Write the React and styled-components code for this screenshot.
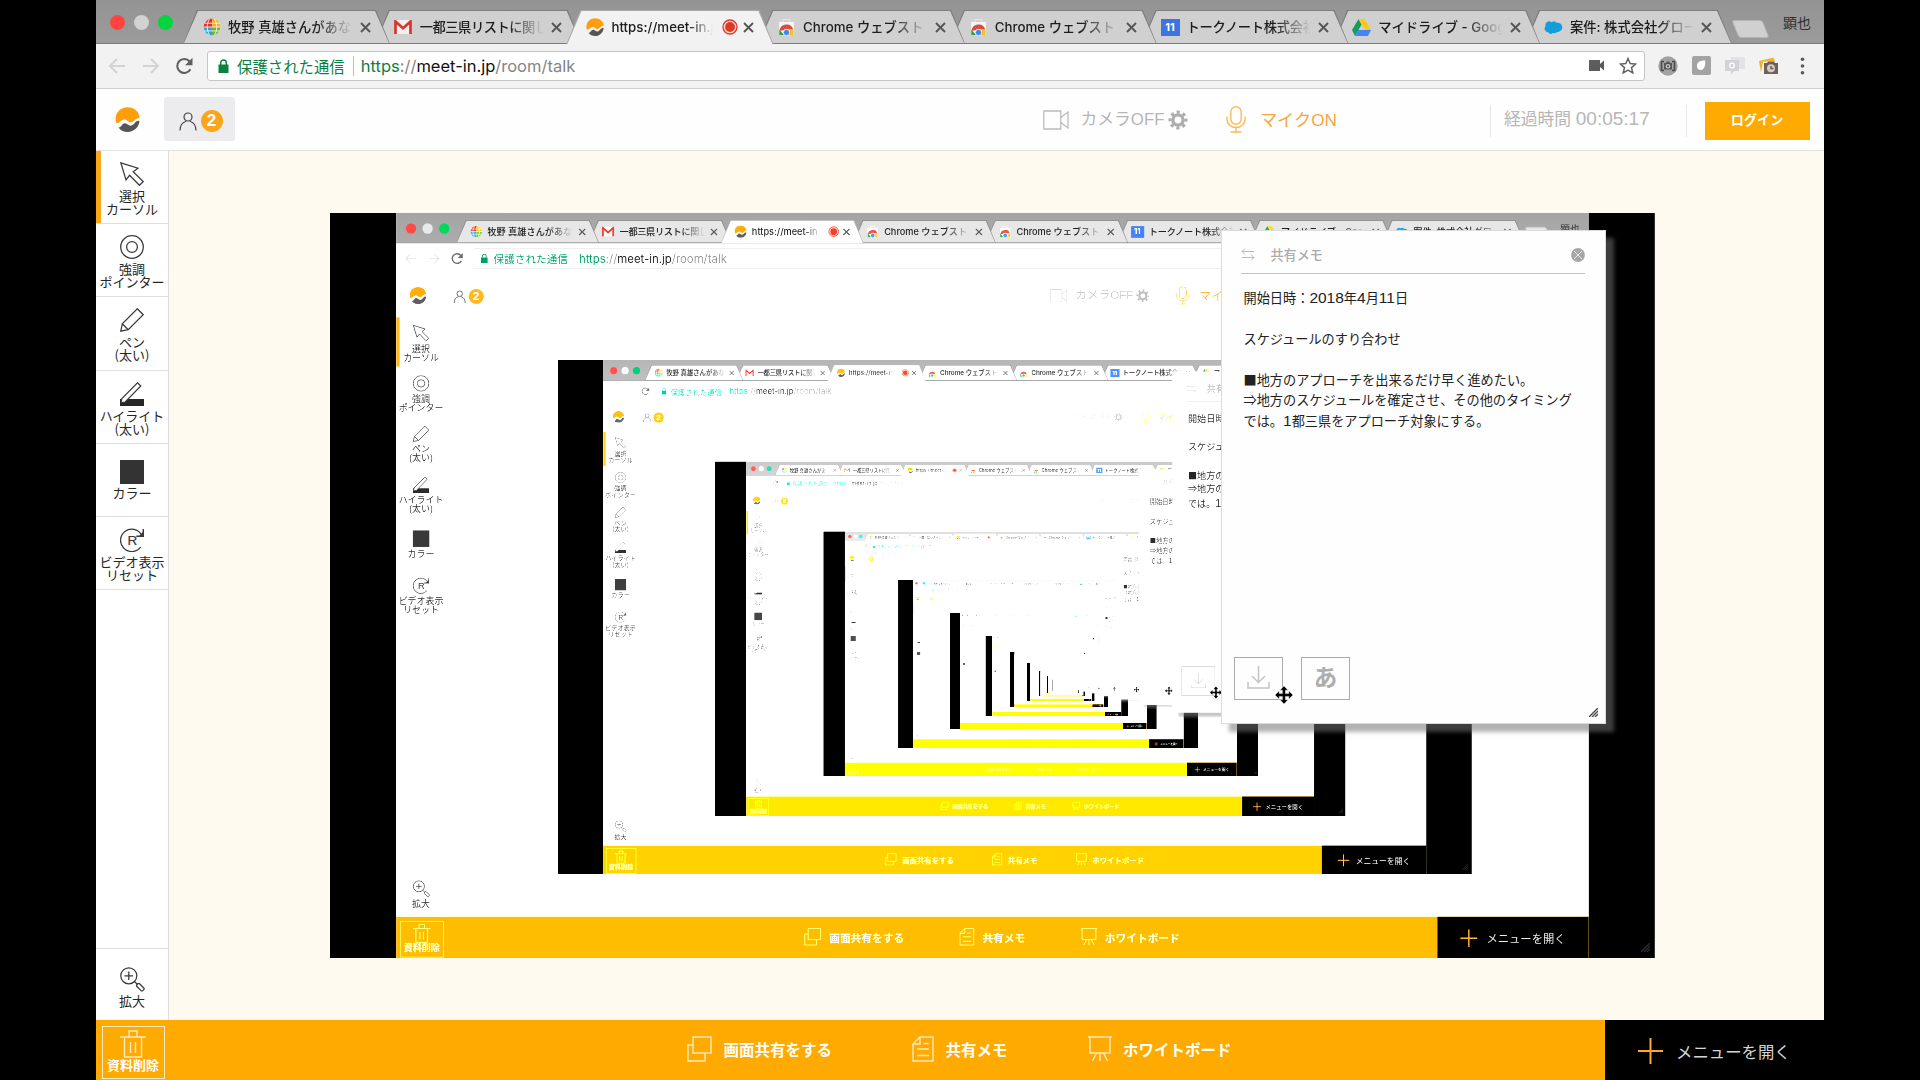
import React from "react";
import styled, { createGlobalStyle, css, ThemeProvider } from "styled-components";

const SCALE = 0.69;
const MAX_DEPTH = 12;
const GLOW_DEPTH = 7;

const jp = `"Noto Sans CJK JP", sans-serif`;

/* Tints drift as the shared picture is captured again and again. */
const tints = [
  { secure: "#0b8043", green: "#04d53c", text: "#ffffff", stroke: "#ffe9bd" },
  { secure: "#00905a", green: "#00c254", text: "#ffffd8", stroke: "#fff070" },
  { secure: "#00a88a", green: "#00a868", text: "#ffffa8", stroke: "#fff440" },
  { secure: "#00b4ac", green: "#1ca488", text: "#ffff80", stroke: "#ffff20" },
  { secure: "#00b4c0", green: "#10a8a8", text: "#ffff50", stroke: "#ffff00" },
  { secure: "#00b4c0", green: "#10a8a8", text: "#ffff10", stroke: "#ffff00" },
];

const GlobalStyle = createGlobalStyle`
  *, *::before, *::after { box-sizing: border-box; }
  body { margin: 0; background: #000; overflow: hidden; }
`;

/* ---------- screen ---------- */

const ScreenRoot = styled.div`
  position: relative;
  width: 1920px;
  height: 1080px;
  display: flex;
  justify-content: center;
  background: #000;
  overflow: hidden;
  font-family: "Liberation Sans", ${jp};
  font-size: 16.8px;
  white-space: nowrap;
`;

const BrowserWindow = styled.div`
  width: 1728px;
  height: 1080px;
  display: flex;
  flex-direction: column;
  background: #fff;
`;

/* ---------- tab strip ---------- */

const TabStrip = styled.div`
  height: 44px;
  flex: none;
  display: flex;
  align-items: flex-end;
  background: linear-gradient(#949494, #9b9b9b);
  font-family: Inter, ${jp};
  isolation: isolate;
`;

const Lights = styled.div`
  width: 87px;
  height: 44px;
  padding: 1px 0 0 14px;
  display: flex;
  align-items: center;
  gap: 9px;
  box-shadow: inset 0 -1px #7d7d7d;
`;

const Light = styled.span`
  width: 15px;
  height: 15px;
  border-radius: 50%;
  background: ${(p) => p.$color || p.theme.green};
`;

const slant = "polygon(0 100%, 14px 0, calc(100% - 14px) 0, 100% 100%)";

const Tab = styled.div`
  position: relative;
  z-index: ${(p) => p.$z};
  width: 207px;
  height: 34px;
  flex: none;
  margin-right: -15.3px;
  padding: 0 19.5px 0 19px;
  display: flex;
  align-items: center;
  &::before {
    content: "";
    position: absolute;
    inset: 0;
    z-index: -2;
    background: ${(p) => (p.$active ? "#a9a9a9" : "#7d7d7d")};
    clip-path: ${slant};
  }
  &::after {
    content: "";
    position: absolute;
    inset: 1px 1px ${(p) => (p.$active ? 0 : 1)}px;
    z-index: -1;
    background: ${(p) => (p.$active ? "#f2f2f2" : "#d0d0d0")};
    clip-path: ${slant};
  }
`;

const TabIcon = styled.span`
  width: 19px;
  height: 20px;
  flex: none;
  display: flex;
  align-items: center;
  justify-content: center;
`;

const TabTitle = styled.span`
  flex: 1;
  margin-left: 7px;
  overflow: hidden;
  font-size: 13.3px;
  font-weight: 500;
  letter-spacing: ${(p) => p.$spacing || 0}px;
  line-height: 22px;
  color: #1c1c1c;
  mask-image: linear-gradient(90deg, #000 70%, transparent ${(p) => (p.$fadeEarly ? 92 : 99)}%);
`;

const TabClose = styled.span`
  width: ${(p) => (p.$tight ? 16 : 17)}px;
  display: flex;
  justify-content: flex-end;
`;

const CalendarIcon = styled.span`
  width: 19px;
  height: 17px;
  background: #3f74e0;
  color: #fff;
  font-size: 11px;
  font-weight: 700;
  line-height: 17px;
  text-align: center;
`;

const RestStrip = styled.div`
  flex: 1;
  height: 44px;
  padding: 0 13px 0 14px;
  display: flex;
  align-items: center;
  justify-content: space-between;
  box-shadow: inset 0 -1px #7d7d7d;
  font-size: 14px;
  color: #303030;
`;

const NewTab = styled.span`
  width: 31px;
  height: 18px;
  margin: 13px 0 0 4px;
  border-radius: 3px;
  transform: skewX(22deg);
  background: #d0d0d0;
  border: 1px solid #b4b4b4;
`;

/* ---------- address row ---------- */

const Toolbar = styled.div`
  height: 45px;
  flex: none;
  display: flex;
  align-items: center;
  padding: 0 19px 1px 12px;
  background: #f2f2f2;
  border-bottom: 1.5px solid #cfcfcf;
`;

const NavButtons = styled.div`
  width: 99px;
  display: flex;
  gap: 15.7px;
`;

const AddressBar = styled.div`
  width: 1438px;
  height: 30px;
  padding: 0 7px 0 10px;
  display: flex;
  align-items: center;
  background: #fff;
  border: 1.5px solid #c6c6c6;
  border-radius: 3px;
`;

const Secure = styled.span`
  margin-left: 8px;
  padding-right: 8px;
  border-right: 1px solid #bdbdbd;
  color: ${(p) => p.theme.secure};
  font-family: ${jp};
  font-size: 15.4px;
  line-height: 20px;
`;

const Url = styled.span`
  flex: 1;
  margin-left: 7px;
  font-family: Inter, sans-serif;
  font-size: 16.5px;
  line-height: 20px;
  color: #858585;
  b { font-weight: 400; color: #111; }
  i { font-style: normal; color: ${(p) => p.theme.secure}; }
`;

const BarIcons = styled.div`
  display: flex;
  align-items: center;
  gap: 15px;
`;

const Extensions = styled.div`
  flex: 1;
  display: flex;
  align-items: center;
  gap: 14px;
  padding-left: 13px;
`;

/* ---------- app header ---------- */

const AppHeader = styled.header`
  height: 62px;
  flex: none;
  display: flex;
  align-items: center;
  padding: 0 14px 0 19px;
  background: #fefefe;
  border-bottom: 1px solid #e2e2e2;
`;

const Members = styled.div`
  width: 71px;
  height: 44px;
  margin: -2px 0 0 24px;
  padding: 5px 0 0 15px;
  display: flex;
  align-items: center;
  gap: 3.5px;
  background: #ececee;
  border-radius: 3px;
`;

const Badge = styled.span`
  width: 22px;
  height: 22px;
  border-radius: 50%;
  background: #faa61a;
  color: #fff;
  font-weight: 700;
  font-size: 17px;
  line-height: 22px;
  text-align: center;
`;

const DeviceToggle = styled.div`
  display: flex;
  align-items: center;
  gap: ${(p) => p.$gap}px;
  margin-left: ${(p) => p.$left}px;
  color: ${(p) => (p.$on ? "#f8a640" : "#b6b6b6")};
  font-size: ${(p) => (p.$on ? 17.2 : 16.8)}px;
  line-height: 24px;
  svg + span + svg { margin-left: -8px; }
`;

const Elapsed = styled.div`
  width: 197px;
  height: 32px;
  margin: 3px 0 0 auto;
  padding-left: 13px;
  border: solid #e6e6e6;
  border-width: 0 1px;
  color: #b6b6b6;
  line-height: 30px;
`;

const Num = styled.span`
  font-family: "Liberation Sans", sans-serif;
  font-size: ${(p) => p.$size}px;
  line-height: 1;
`;

const Login = styled.button`
  width: 105px;
  height: 38px;
  margin: 2px 0 0 18px;
  padding: 0 1px 2px 0;
  border: 0;
  background: #ffaa00;
  color: #fff;
  font: 700 13.2px ${jp};
`;

/* ---------- body ---------- */

const Body = styled.div`
  height: 869px;
  flex: none;
  display: flex;
`;

const Sidebar = styled.nav`
  width: 73px;
  flex: none;
  display: flex;
  flex-direction: column;
  background: #fff;
  border-right: 1px solid #dedede;
`;

const Tool = styled.div`
  height: 73.2px;
  padding-top: 3px;
  display: flex;
  flex-direction: column;
  align-items: center;
  justify-content: center;
  gap: 3px;
  border-bottom: 1.5px solid #dedede;
  box-shadow: ${(p) => (p.$active ? "inset 5px 0 #faa61a" : "none")};
  color: #262626;
  font-family: ${jp};
  font-size: 13px;
  line-height: 13px;
  text-align: center;
  white-space: pre;
  ${(p) =>
    p.$single &&
    css`
      padding-top: 0;
      gap: 2px;
    `}
  ${(p) =>
    p.$bottom &&
    css`
      height: 72px;
      margin-top: auto;
      padding-top: 5px;
      gap: 2px;
      border-top: 1px solid #dedede;
      border-bottom: 0;
    `}
`;

const Swatch = styled.span`
  width: 24px;
  height: 24px;
  background: #333;
`;

const Stage = styled.main`
  flex: 1;
  padding: 61.7px 0 0 161px;
  background: #fffaef;
`;

const SharedView = styled.div`
  position: relative;
  width: ${1920 * SCALE}px;
  height: ${1080 * SCALE}px;
  overflow: hidden;
  background: #fff;
`;

const Mirror = styled.div`
  width: 1920px;
  height: 1080px;
  transform: scale(${SCALE});
  transform-origin: 0 0;
  filter: brightness(1.11);
`;

/* The innermost footers pile up into one yellow wedge. */
const Glow = styled.span`
  position: absolute;
  left: 380px;
  top: 472px;
  width: 630px;
  height: 150px;
  clip-path: polygon(54% 0, 64% 6%, 100% 100%, 0 100%);
  background: linear-gradient(#ffffa0, #ffff30);
  opacity: 0.8;
`;

const Grip = styled.span`
  position: absolute;
  right: ${(p) => (p.$faint ? 5 : 7)}px;
  bottom: 6px;
  display: flex;
  opacity: ${(p) => (p.$faint ? 0.6 : 1)};
`;

/* ---------- footer ---------- */

const Footer = styled.footer`
  height: 60px;
  flex: none;
  display: flex;
  background: #ffaa00;
  color: ${(p) => p.theme.text};
  font-family: ${jp};
  svg { stroke: ${(p) => p.theme.stroke}; }
`;

const DeleteButton = styled.div`
  width: 63px;
  height: 53px;
  margin: 6px 0 0 5.5px;
  padding-top: 3px;
  display: flex;
  flex-direction: column;
  align-items: center;
  border: 1.4px solid ${(p) => p.theme.stroke};
  font-size: 13px;
  font-weight: 700;
  line-height: 14px;
`;

const FooterItem = styled.div`
  width: ${(p) => p.$width}px;
  margin-left: ${(p) => p.$left || 0}px;
  display: flex;
  align-items: center;
  gap: 11.5px;
  padding-bottom: 2.5px;
  font-size: 15.5px;
  font-weight: 700;
`;

const MenuButton = styled.div`
  width: 219px;
  margin-left: auto;
  padding: 2px 0 0 33px;
  display: flex;
  align-items: center;
  gap: 13px;
  background: #000;
  color: #d6d6d6;
  font-size: 16.4px;
`;

/* ---------- memo ---------- */

const MemoWindow = styled.section`
  position: absolute;
  left: 1221px;
  top: 230px;
  width: 385px;
  height: 493.5px;
  padding: 0 20px 23px 12px;
  display: flex;
  flex-direction: column;
  background: #fefefe;
  border: 1px solid #dcdcdc;
  box-shadow: 8px 8px 4px rgba(112, 112, 112, 0.54);
`;

const MemoHead = styled.div`
  height: 43px;
  margin-left: 7px;
  padding-top: 5px;
  display: flex;
  align-items: center;
  border-bottom: 1.6px solid #c2c2c2;
  color: #ababab;
  font: 500 13.1px ${jp};
  span { flex: 1; margin-left: 15.5px; }
`;

const MemoText = styled.div`
  flex: 1;
  margin: 14.4px -10px 0 9.5px;
  color: #222;
  font-family: ${jp};
  font-size: 13.18px;
  line-height: 20.4px;
  white-space: pre;
`;

const MemoActions = styled.div`
  display: flex;
  gap: 18px;
`;

const MemoButton = styled.div`
  width: 49px;
  height: 43px;
  padding-bottom: ${(p) => (p.$glyph ? 4 : 1)}px;
  display: flex;
  align-items: center;
  justify-content: center;
  border: 1.4px solid #ababab;
  color: #adadad;
  font: 700 23.5px/30px ${jp};
`;

const Pointer = styled.span`
  position: absolute;
  left: 1275px;
  top: 686px;
  display: flex;
`;

/* ---------- icons ---------- */

const Logo = ({ size }) => (
  <svg width={size} height={size} viewBox="0 0 24 24">
    <path fill="#ff9d0a" d="M1.2 15.6C-1.4 7.500 4 .2 12 .2c6.600 0 11.200 4.300 11.700 10.300-3.400-.3-4.800 2.200-7.200 3.800-3 1.900-4.200-2.600-7.800-2.300-3 .3-4 3.600-7.500 3.600z" />
    <path fill="#555559" d="M3.400 19.600c3.200.2 3.200-4.200 6.200-4 2.700.2 3.600 3.300 6.700 2 3.400-1.300 2.700-4.600 7.200-4.300C23.200 19.600 18 24 12.300 24c-3.900 0-7-1.600-8.900-4.400z" />
  </svg>
);

const Globe = () => (
  <svg width="18" height="18" viewBox="0 0 18 18">
    <circle cx="9" cy="9" r="8.500" fill="#fff" />
    <path fill="#e0342c" d="M.6 9A8.400 8.400 0 0 1 9.500.6L9 9z" />
    <path fill="#f6b21b" d="M9.500.6a8.400 8.400 0 0 1 7.900 8.400H9z" />
    <path fill="#2e9fd8" d="M.6 9H9v8.400A8.400 8.400 0 0 1 .6 9z" />
    <path fill="#6cb640" d="M9 9h8.400A8.400 8.400 0 0 1 9 17.400z" />
    <path d="M6.500 1C3.500 6 3.500 12 6.500 17M11.500 1c3 5 3 11 0 16M1.500 5.200h15M1 9h16M1.500 12.900h15" stroke="#fff" strokeWidth=".8" fill="none" />
  </svg>
);

const Mail = () => (
  <svg width="18" height="14" viewBox="0 0 18 14">
    <path fill="#f0f0f0" d="M1 0h16v14H1z" />
    <path d="M1.500 14V1.500L9 8.200l7.500-6.700V14" fill="none" stroke="#d9372b" strokeWidth="2.700" />
  </svg>
);

const Store = () => (
  <svg width="17" height="18" viewBox="0 0 17 18">
    <path fill="#f4f4f4" d="M1 4h15v13H1z" />
    <path d="M5 4V1.500h7V4" stroke="#e6e6e6" fill="none" />
    <path fill="#dd4b3e" d="M1.500 13a7 7 0 0 1 13.700-1.500H8z" />
    <path fill="#2ba24c" d="M1.300 17v-5.500L6 17z" />
    <path fill="#fbc116" d="M15.500 12v5H10l2-5z" />
    <circle cx="8.500" cy="14.500" r="3.200" fill="#4285f4" stroke="#fff" strokeWidth=".8" />
  </svg>
);

const Drive = () => (
  <svg width="19" height="17" viewBox="0 0 19 17">
    <path fill="#169c58" d="M6.500 0 0 11l3 6 6.600-11.500z" />
    <path fill="#fbc91b" d="M6.500 0h6L19 11h-6.200z" />
    <path fill="#4486f0" d="M6.400 11H19l-3 6H3z" />
  </svg>
);

const Cloud = () => (
  <svg width="20" height="15" viewBox="0 0 20 14">
    <path fill="#119edb" d="M4.800 12.200A4 4 0 0 1 1.600 5.600 4 4 0 0 1 8 1.500a4.200 4.200 0 0 1 5.600.6 4.600 4.600 0 0 1 1.800 9.300c-1 .3-1.600 0-2.200.6-1.300 1.400-3 1-4 .9-1.500 1.400-3.600 1-4.400-.7z" />
  </svg>
);

const Cross = () => (
  <svg width="11" height="11" viewBox="0 0 11 11">
    <path d="M1 1l9 9M10 1l-9 9" stroke="#555" strokeWidth="1.900" />
  </svg>
);

const Recording = () => (
  <svg width="16" height="16" viewBox="0 0 16 16">
    <circle cx="8" cy="8" r="7" fill="#f7d5d0" stroke="#da3b27" strokeWidth="1.300" />
    <circle cx="8" cy="8" r="4.900" fill="#db3a25" />
  </svg>
);

const Arrow = ({ flip }) => (
  <svg width="18" height="18" viewBox="0 0 18 18">
    <path d={flip ? "M1 9h15M9 2l7 7-7 7" : "M17 9H2M9 2 2 9l7 7"} fill="none" stroke="#d3d3d3" strokeWidth="2" />
  </svg>
);

const Reload = () => (
  <svg width="19" height="18" viewBox="0 0 19 18">
    <path d="M15.400 12.300A7 7 0 1 1 14.600 4.500" fill="none" stroke="#606060" strokeWidth="2.100" />
    <path d="M17.500.8v7.400h-7.400z" fill="#606060" />
  </svg>
);

const LockShape = styled.svg`
  fill: ${(p) => p.theme.secure};
  path + path { fill: none; stroke: ${(p) => p.theme.secure}; }
`;

const Lock = () => (
  <LockShape width="11" height="14" viewBox="0 0 11 14">
    <path d="M.5 5.500h10V14H.5z" />
    <path d="M2.700 6V3.700a2.800 2.800 0 0 1 5.600 0V6" strokeWidth="1.500" />
  </LockShape>
);

const SmallCam = () => (
  <svg width="15" height="11" viewBox="0 0 15 11">
    <path fill="#5c5c5c" d="M0 0h11v4l4-3.500v10L11 7v4H0z" />
  </svg>
);

const Star = () => (
  <svg width="18" height="17" viewBox="0 0 18 17">
    <path d="m9 1.500 2.200 5 5.400.5-4.100 3.600 1.300 5.300L9 13.100l-4.800 2.800 1.300-5.300L1.400 7l5.400-.5z" fill="none" stroke="#636363" strokeWidth="1.500" />
  </svg>
);

const ExtCapture = () => (
  <svg width="20" height="20" viewBox="0 0 20 20">
    <circle cx="10" cy="10" r="9.700" fill="#a2a2a2" />
    <path d="M6 5.500H3.500v9H6M14 5.500h2.500v9H14" fill="none" stroke="#4a4a4a" strokeWidth="1.600" />
    <path fill="#555" d="M6 7h2l.7-1.500h2.600L12 7h2v6.500H6z" />
    <circle cx="10" cy="10.200" r="2.300" fill="#c8c8c8" />
    <circle cx="10" cy="10.200" r="1" fill="#444" />
  </svg>
);

const ExtBox = () => (
  <svg width="19" height="19" viewBox="0 0 19 19">
    <rect width="19" height="19" rx="2" fill="#a3a3a3" />
    <path fill="#fff" d="M5 10c0-4 3-5.500 8-5.500C14 9 12 14 8.500 14 6.500 14 5 12.500 5 10z" />
  </svg>
);

const ExtChat = () => (
  <svg width="20" height="18" viewBox="0 0 20 18">
    <path fill="#e3e3e5" d="M6 0h14v12H6z" />
    <path fill="#d3d3d7" d="M0 3h14v11H9l-3 4v-4H0z" />
    <circle cx="7" cy="8.500" r="2.300" fill="none" stroke="#fff" strokeWidth="1.300" />
  </svg>
);

const ExtShot = () => (
  <svg width="20" height="18" viewBox="0 0 20 18">
    <path fill="#f0b429" d="M0 4 14.500.5l1.500 4H4l-2 11z" />
    <path fill="#6a625b" d="M5 6h3l1-1.500h6L16 6h3v11H5z" />
    <circle cx="12" cy="11.300" r="4" fill="#d6ccb8" />
    <path d="M12 9v2.500h2.500" stroke="#6a625b" strokeWidth="1.500" fill="none" />
  </svg>
);

const DotsShape = styled.svg`
  margin-left: 7px;
`;

const Dots = () => (
  <DotsShape width="5" height="18" viewBox="0 0 5 18" fill="#5a5a5a">
    <circle cx="2.500" cy="2.300" r="1.800" />
    <circle cx="2.500" cy="9" r="1.800" />
    <circle cx="2.500" cy="15.700" r="1.800" />
  </DotsShape>
);

const Person = () => (
  <svg width="18" height="19" viewBox="0 0 18 19" fill="none" stroke="#444" strokeWidth="1.200">
    <circle cx="9" cy="5" r="4" />
    <path d="M1 18.500c0-5 2-8 6-9.300M17 18.500c0-5-2-8-6-9.300" />
  </svg>
);

const Camera = () => (
  <svg width="26" height="20" viewBox="0 0 26 20" fill="none" stroke="#bcbcbc" strokeWidth="1.300">
    <path d="M.8 1h17v18H.8z" />
    <path d="M17.800 7.500 25 2v16l-7.200-5.500" />
  </svg>
);

const Gear = () => (
  <svg width="20" height="20" viewBox="0 0 20 20">
    <g fill="none" stroke="#adadad">
      <circle cx="10" cy="10" r="5.100" strokeWidth="3.300" />
      <circle cx="10" cy="10" r="7.900" strokeWidth="3.200" strokeDasharray="3.100 3.104" strokeDashoffset="1.550" />
    </g>
  </svg>
);

const Mic = () => (
  <svg width="20" height="27" viewBox="0 0 20 27" fill="none" stroke="#fbb957" strokeWidth="1.400">
    <rect x="4.800" y=".8" width="10.400" height="17.400" rx="5.200" />
    <path d="M1 10.500v3a9 8 0 0 0 18 0v-3M10 21.500V26M4.500 26h11" />
  </svg>
);

const line = { fill: "none", stroke: "#3a3a3a", strokeWidth: 1.25 };

const CursorTool = () => (
  <svg width="24" height="24" viewBox="0 0 24 24" {...line}>
    <path d="M.8.8 18 6.200l-4.800 3.600 10 9.800-3.800 3.700-9.800-10L6 18z" />
  </svg>
);

const TargetTool = () => (
  <svg width="24" height="24" viewBox="0 0 24 24" {...line}>
    <circle cx="12" cy="12" r="11.300" />
    <circle cx="12" cy="12" r="5.400" />
  </svg>
);

const PenTool = () => (
  <svg width="24" height="24" viewBox="0 0 24 24" {...line}>
    <path d="M17.300.8 23.200 6.700 8.200 21.700.8 23.200 2.300 15.800zM2.300 15.800l5.900 5.900" />
  </svg>
);

const MarkerTool = () => (
  <svg width="24" height="24" viewBox="0 0 24 24">
    <path fill="#262626" d="M0 17h24v7H0z" />
    <path d="M17.500.8 20.800 4 5.200 20 1 20.500l.9-4z" fill="#fff" stroke="#3a3a3a" strokeWidth="1.200" />
  </svg>
);

const ResetLetter = styled.text`
  font: 13.5px "Liberation Sans", sans-serif;
  fill: #3a3a3a;
  stroke: #3a3a3a;
  stroke-width: 0.2px;
`;

const ResetTool = () => (
  <svg width="24" height="24" viewBox="0 0 24 24" {...line}>
    <path d="M20.600 19.200A11.200 11.200 0 1 1 21.500 6.800" />
    <path d="M23.300 1v7.200h-7" strokeWidth="1.500" />
    <path d="M23.300 3.500v4.700h-4.500z" fill="#3a3a3a" stroke="none" />
    <ResetLetter x="7.500" y="17.300">R</ResetLetter>
  </svg>
);

const ZoomTool = () => (
  <svg width="25" height="25" viewBox="0 0 25 25" {...line}>
    <circle cx="8.800" cy="8.800" r="8" />
    <path d="M8.800 4.500v8.600M4.500 8.800h8.600M14.500 14.500l3 3" />
    <rect x="16.200" y="18.300" width="8.300" height="3.800" rx="1.200" transform="rotate(45 20.300 20.200)" />
  </svg>
);

const wline = { fill: "none", strokeWidth: 1.4 };

const Trash = () => (
  <svg width="26" height="28" viewBox="0 0 26 28" {...wline}>
    <path d="M0 7h26M4.500 7v20h17V7M9 7V1h8v6M10.500 12v11M15.500 12v11" />
  </svg>
);

const ShareIcon = () => (
  <svg width="25" height="26" viewBox="0 0 25 26" {...wline}>
    <path d="M6 1h18v16H6zM6 9H1v16h17v-8" />
  </svg>
);

const MemoIcon = () => (
  <svg width="22" height="26" viewBox="0 0 22 26" {...wline}>
    <path d="M8 1h13v24H1V8zM8 1v7H1M11.500 7.500h5M5 13h12M5 19.500h12" />
  </svg>
);

const BoardIcon = () => (
  <svg width="24" height="26" viewBox="0 0 24 26" {...wline}>
    <path d="M0 1h24M2 1v16h20V1M8.500 17l-4 8M12 17v8M15.500 17l4 8" />
  </svg>
);

const Plus = () => (
  <svg width="25" height="26" viewBox="0 0 25 26">
    <path d="M12.500 0v26M0 13h25" stroke="#ffa92a" strokeWidth="2" />
  </svg>
);

const Swap = () => (
  <svg width="14" height="13" viewBox="0 0 14 13" fill="none" stroke="#b9b9b9">
    <path d="M13 3.500H1M4 .5l-3 3 3 3M1 9.500h12M10 6.500l3 3-3 3" />
  </svg>
);

const CloseDisc = () => (
  <svg width="14" height="14" viewBox="0 0 14 14">
    <circle cx="7" cy="7" r="6.900" fill="#a6a6a6" />
    <path d="m3 3 8 8M11 3l-8 8" stroke="#e8e8e8" strokeWidth="1" />
  </svg>
);

const Download = () => (
  <svg width="23" height="23" viewBox="0 0 23 23" fill="none" stroke="#c4c4c4" strokeWidth="1.500">
    <path d="M11.500 0v16M5 10l6.500 6.500L18 10M1 16v6h21v-6" />
  </svg>
);

const MoveCursor = () => (
  <svg width="18" height="18" viewBox="0 0 18 18">
    <path d="M9 0l4 4.200h-2.600v3.400h3.400V5L18 9l-4.200 4v-2.600h-3.400v3.400H13L9 18l-4-4.200h2.600v-3.400H4.200V13L0 9l4.200-4v2.600h3.400V4.200H5z" stroke="#fff" strokeWidth=".4" />
  </svg>
);

const GripLines = () => (
  <svg width="9" height="9" viewBox="0 0 9 9">
    <path d="M0 9 9 0M3 9l6-6M6 9l3-3" stroke="#4a4a4a" strokeWidth="1.400" />
  </svg>
);

/* ---------- data ---------- */

const tabs = [
  { icon: <Globe />, title: "牧野 真雄さんがあなた" },
  { icon: <Mail />, title: "一都三県リストに関して", spacing: -0.5 },
  { icon: <Logo size={18} />, title: "https://meet-in.jp", active: true },
  { icon: <Store />, title: "Chrome ウェブスト" },
  { icon: <Store />, title: "Chrome ウェブスト" },
  { icon: <CalendarIcon>11</CalendarIcon>, title: "トークノート株式会社", spacing: -0.3 },
  { icon: <Drive />, title: "マイドライブ - Google" },
  { icon: <Cloud />, title: "案件: 株式会社グロー" },
];

const tools = [
  { icon: <CursorTool />, label: "選択\nカーソル", active: true },
  { icon: <TargetTool />, label: "強調\nポインター" },
  { icon: <PenTool />, label: "ペン\n(太い)" },
  { icon: <MarkerTool />, label: "ハイライト\n(太い)" },
  { icon: <Swatch />, label: "カラー", single: true },
  { icon: <ResetTool />, label: "ビデオ表示\nリセット" },
];

const memo = `開始日時：2018年4月11日

スケジュールのすり合わせ

■地方のアプローチを出来るだけ早く進めたい。
⇒地方のスケジュールを確定させ、その他のタイミング
では。1都三県をアプローチ対象にする。`;

/* ---------- assembly ---------- */

/* Sets runs of digits in the Latin face at their own size. */
function Mixed({ text, size }) {
  return text.split(/([0-9:]+)/).map((part, i) =>
    i % 2 ? (
      <Num key={i} $size={size}>
        {part}
      </Num>
    ) : (
      part
    )
  );
}

function Chrome() {
  return (
    <>
      <TabStrip>
        <Lights>
          <Light $color="#ff4440" />
          <Light $color="#d2d2d2" />
          <Light />
        </Lights>
        {tabs.map((t, i) => (
          <Tab key={i} $active={t.active} $z={t.active ? 20 : 10 - i}>
            <TabIcon>{t.icon}</TabIcon>
            <TabTitle $spacing={t.spacing} $fadeEarly={t.active}>
              {t.title}
            </TabTitle>
            {t.active && <Recording />}
            <TabClose $tight={t.active}>
              <Cross />
            </TabClose>
          </Tab>
        ))}
        <RestStrip>
          <NewTab />
          <span>顕也</span>
        </RestStrip>
      </TabStrip>
      <Toolbar>
        <NavButtons>
          <Arrow />
          <Arrow flip />
          <Reload />
        </NavButtons>
        <AddressBar>
          <Lock />
          <Secure>保護された通信</Secure>
          <Url>
            <i>https</i>://<b>meet-in.jp</b>/room/talk
          </Url>
          <BarIcons>
            <SmallCam />
            <Star />
          </BarIcons>
        </AddressBar>
        <Extensions>
          <ExtCapture />
          <ExtBox />
          <ExtChat />
          <ExtShot />
          <Dots />
        </Extensions>
      </Toolbar>
    </>
  );
}

function Memo() {
  return (
    <MemoWindow>
      <MemoHead>
        <Swap />
        <span>共有メモ</span>
        <CloseDisc />
      </MemoHead>
      <MemoText>
        <Mixed text={memo} size={15.5} />
      </MemoText>
      <MemoActions>
        <MemoButton>
          <Download />
        </MemoButton>
        <MemoButton $glyph>あ</MemoButton>
      </MemoActions>
      <Grip>
        <GripLines />
      </Grip>
    </MemoWindow>
  );
}

function Screen({ depth }) {
  return (
    <ThemeProvider theme={tints[Math.min(depth, tints.length - 1)]}>
      <ScreenRoot>
        <BrowserWindow>
          <Chrome />
          <AppHeader>
            <Logo size={25} />
            <Members>
              <Person />
              <Badge>2</Badge>
            </Members>
            <DeviceToggle $gap={12} $left={807.5}>
              <Camera />
              <span>カメラOFF</span>
              <Gear />
            </DeviceToggle>
            <DeviceToggle $on $gap={13.500} $left={38}>
              <Mic />
              <span>マイクON</span>
            </DeviceToggle>
            <Elapsed>
              <Mixed text="経過時間 00:05:17" size={19} />
            </Elapsed>
            <Login>ログイン</Login>
          </AppHeader>
          <Body>
            <Sidebar>
              {tools.map((t) => (
                <Tool key={t.label} $active={t.active} $single={t.single}>
                  {t.icon}
                  <span>{t.label}</span>
                </Tool>
              ))}
              <Tool $bottom>
                <ZoomTool />
                <span>拡大</span>
              </Tool>
            </Sidebar>
            <Stage>
              <SharedView>
                {depth < MAX_DEPTH && (
                  <Mirror>
                    <Screen depth={depth + 1} />
                  </Mirror>
                )}
                {depth === GLOW_DEPTH && <Glow />}
                <Grip $faint>
                  <GripLines />
                </Grip>
              </SharedView>
            </Stage>
          </Body>
          <Footer>
            <DeleteButton>
              <Trash />
              資料削除
            </DeleteButton>
            <FooterItem $width={225} $left={522.5}>
              <ShareIcon />
              画面共有をする
            </FooterItem>
            <FooterItem $width={175.5}>
              <MemoIcon />
              共有メモ
            </FooterItem>
            <FooterItem $width={160}>
              <BoardIcon />
              ホワイトボード
            </FooterItem>
            <MenuButton>
              <Plus />
              メニューを開く
            </MenuButton>
          </Footer>
        </BrowserWindow>
        <Memo />
        <Pointer>
          <MoveCursor />
        </Pointer>
      </ScreenRoot>
    </ThemeProvider>
  );
}

export default function App() {
  return (
    <>
      <GlobalStyle />
      <Screen depth={0} />
    </>
  );
}
